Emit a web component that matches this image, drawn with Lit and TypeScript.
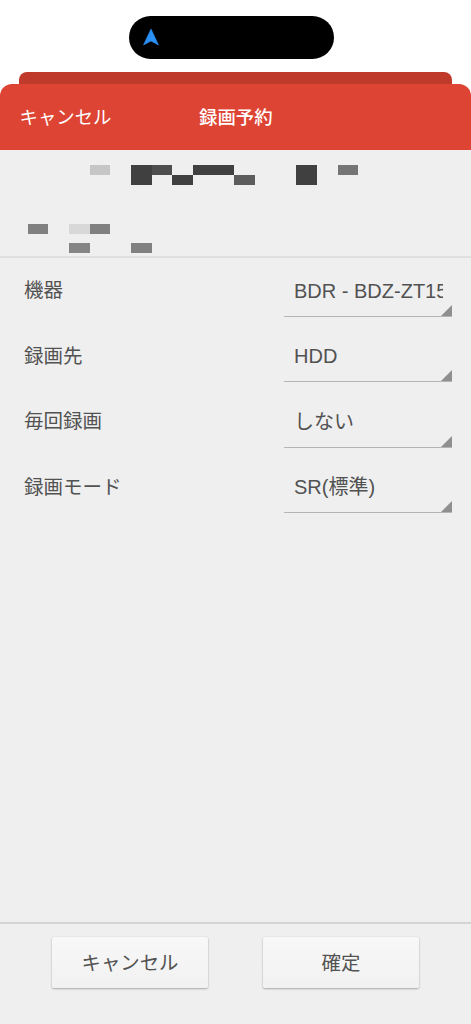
import { LitElement, html, css } from "lit";
import { customElement } from "lit/decorators.js";

type Cell = [number, number, number, number, string];

const topCells: Cell[] = [
  [4, 1, 1, 1, "#c6c6c6"],
  [6, 1, 1, 2, "#404040"],
  [7, 1, 1, 1, "#4e4e4e"],
  [8, 2, 1, 1, "#404040"],
  [9, 1, 2, 1, "#404040"],
  [11, 2, 1, 1, "#5c5c5c"],
  [14, 1, 1, 2, "#404040"],
  [16, 1, 1, 1, "#757575"],
];
const bottomCells: Cell[] = [
  [1, 1, 1, 1, "#808080"],
  [3, 1, 1, 1, "#d8d8d8"],
  [4, 1, 1, 1, "#808080"],
  [3, 3, 1, 1, "#858585"],
  [6, 3, 1, 1, "#808080"],
];

const rows = [
  ["機器", "BDR - BDZ-ZT1500"],
  ["録画先", "HDD"],
  ["毎回録画", "しない"],
  ["録画モード", "SR(標準)"],
];

@customElement("app-root")
export class AppRoot extends LitElement {
  static styles = css`
    :host {
      display: flex;
      flex-direction: column;
      height: 1024px;
      background: #fff;
      font-family: "Liberation Sans", "Noto Sans CJK JP", sans-serif;
      color: #525252;
      overflow: hidden;
    }
    .status {
      height: 72px;
      flex: none;
      display: flex;
      justify-content: center;
      padding: 16px 8px 0 0;
      box-sizing: border-box;
    }
    .pill {
      width: 205px;
      height: 43px;
      border-radius: 22px;
      background: #000;
      display: flex;
      align-items: center;
      padding-left: 14px;
      box-sizing: border-box;
    }
    .pill svg {
      display: block;
      margin-top: -1px;
    }
    .back {
      flex: none;
      height: 12px;
      margin: 0 19px;
      background: #bf3a2b;
      border-radius: 8px 8px 0 0;
    }
    .header {
      flex: none;
      height: 66px;
      background: #dd4433;
      border-radius: 12px 12px 0 0;
      color: #fff;
      font-size: 18.4px;
      display: grid;
      grid-template-columns: 199px auto;
      align-items: center;
      padding: 0 0 3px 19.5px;
      box-sizing: border-box;
    }
    .header .cancel {
      grid-column: 1;
    }
    .header .title {
      font-weight: 500;
      margin-left: -19.5px;
    }
    .content {
      flex: 1;
      display: flex;
      flex-direction: column;
      background: #efefef;
      min-height: 0;
    }
    .mosaic {
      display: grid;
      grid-template-columns: repeat(18, 20.67px);
      grid-auto-rows: 10px;
      padding-left: 7px;
    }
    .mosaic.top {
      padding-top: 15px;
      height: 20px;
    }
    .mosaic.bottom {
      padding-top: 39px;
      height: 29px;
      padding-bottom: 3px;
      grid-template-rows: 10px 9px 10px;
      border-bottom: 2px solid #dfdfdf;
    }
    .rows {
      flex: 1;
      display: flex;
      flex-direction: column;
      padding: 0 19px 0 24px;
    }
    .row {
      flex: none;
      height: 65.5px;
      display: flex;
      justify-content: space-between;
    }
    .label {
      font-size: 19.5px;
      line-height: 28px;
      padding-top: 18px;
    }
    .select {
      position: relative;
      width: 168px;
      height: 45.2px;
      margin-top: 13.5px;
      padding: 0 9px 0 10px;
      box-sizing: border-box;
      font-size: 20px;
      line-height: 28px;
      border-bottom: 1.5px solid #b4b4b4;
      white-space: nowrap;
      overflow: hidden;
    }
    .select .value {
      display: block;
      overflow: hidden;
      padding-top: 5px;
    }
    .select::after {
      content: "";
      position: absolute;
      right: 0;
      bottom: 0;
      border-style: solid;
      border-width: 0 0 11px 11px;
      border-color: transparent transparent #8f8f8f transparent;
    }
    .footer {
      flex: none;
      height: 102px;
      border-top: 2px solid #d4d4d4;
      box-sizing: border-box;
      display: flex;
      gap: 55px;
      padding: 13px 0 0 52px;
    }
    .btn {
      width: 156px;
      height: 51px;
      box-sizing: border-box;
      border: none;
      padding: 0 0 3px;
      border-radius: 2px;
      background: linear-gradient(#f8f8f8, #f1f1f1);
      box-shadow: 0 1px 2px #a8a8a8, 0 0 1px #bdbdbd;
      color: #525252;
      font: inherit;
      font-size: 19.4px;
    }
  `;

  private cells(list: Cell[]) {
    return list.map(
      ([c, r, w, h, bg]) => html`<i
        style="grid-column:${c + 1} / span ${w};grid-row:${r} / span ${h};background:${bg}"
      ></i>`
    );
  }

  render() {
    return html`
      <div class="status">
        <div class="pill">
          <svg width="16" height="18" viewBox="0 0 16 18">
            <path d="M8 1 L15.5 17 L8 13 L0.5 17 Z" fill="#2a90f5" stroke="#2a90f5" stroke-width="0.6" stroke-linejoin="round" />
          </svg>
        </div>
      </div>
      <div class="back"></div>
      <div class="header">
        <span class="cancel">キャンセル</span>
        <span class="title">録画予約</span>
      </div>
      <div class="content">
        <div class="mosaic top">${this.cells(topCells)}</div>
        <div class="mosaic bottom">${this.cells(bottomCells)}</div>
        <div class="rows">
          ${rows.map(
            ([l, v]) => html`<div class="row">
              <span class="label">${l}</span>
              <div class="select"><span class="value">${v}</span></div>
            </div>`
          )}
        </div>
        <div class="footer">
          <button class="btn">キャンセル</button>
          <button class="btn">確定</button>
        </div>
      </div>
    `;
  }
}
